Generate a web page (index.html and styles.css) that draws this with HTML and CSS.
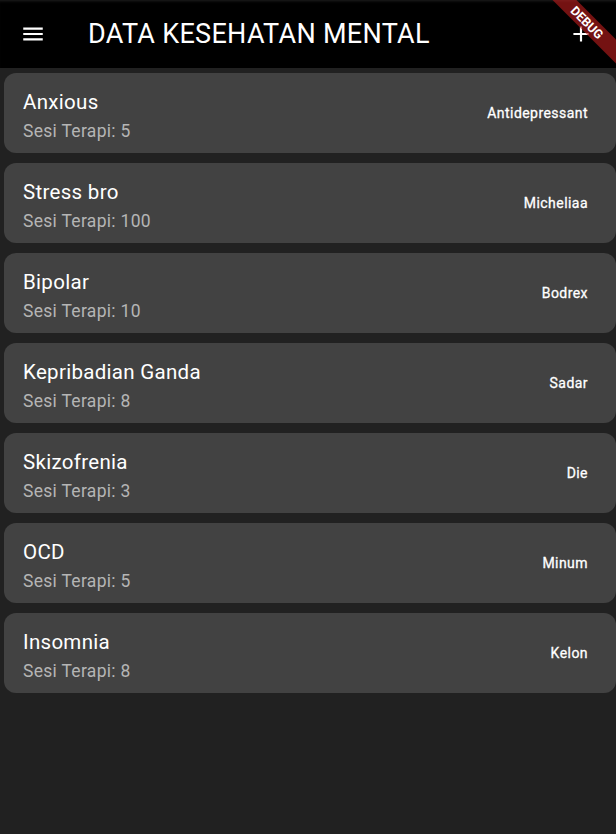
FILE: index.html
```html
<!DOCTYPE html>
<html>
<head>
<meta charset="utf-8">
<link rel="stylesheet" href="styles.css">
</head>
<body>
<header class="appbar">
  <svg class="menu" width="24" height="24" viewBox="0 0 24 24"><path d="M3 18h18v-2H3v2zm0-5h18v-2H3v2zm0-7v2h18V6H3z" fill="#fff"/></svg>
  <h1 class="title">DATA KESEHATAN MENTAL</h1>
  <svg class="add" width="24" height="24" viewBox="0 0 24 24"><path d="M19 13h-6v6h-2v-6H5v-2h6V5h2v6h6v2z" fill="#fff"/></svg>
  <div class="debug">DEBUG</div>
</header>
<main class="list">
  <div class="card"><div class="txt"><div class="name">Anxious</div><div class="sub">Sesi Terapi: 5</div></div><div class="trail">Antidepressant</div></div>
  <div class="card"><div class="txt"><div class="name">Stress bro</div><div class="sub">Sesi Terapi: 100</div></div><div class="trail">Micheliaa</div></div>
  <div class="card"><div class="txt"><div class="name">Bipolar</div><div class="sub">Sesi Terapi: 10</div></div><div class="trail">Bodrex</div></div>
  <div class="card"><div class="txt"><div class="name">Kepribadian Ganda</div><div class="sub">Sesi Terapi: 8</div></div><div class="trail">Sadar</div></div>
  <div class="card"><div class="txt"><div class="name">Skizofrenia</div><div class="sub">Sesi Terapi: 3</div></div><div class="trail">Die</div></div>
  <div class="card"><div class="txt"><div class="name">OCD</div><div class="sub">Sesi Terapi: 5</div></div><div class="trail">Minum</div></div>
  <div class="card"><div class="txt"><div class="name">Insomnia</div><div class="sub">Sesi Terapi: 8</div></div><div class="trail">Kelon</div></div>
</main>
</body>
</html>
```
FILE: styles.css
```css
html, body {
  margin: 0;
  padding: 0;
  background: #212121;
  font-family: Roboto, "Noto Sans", sans-serif;
  width: 616px;
  height: 834px;
  overflow: hidden;
}
.appbar {
  position: relative;
  height: 68px;
  background: #000;
  display: flex;
  align-items: center;
  padding: 0 0 0 20px;
  box-sizing: border-box;
  overflow: hidden;
  box-shadow: inset 0 3px 3px -2px rgba(255,255,255,0.12);
}
.menu {
  width: 26px;
  height: 26px;
}
.title {
  margin: -1px 0 0 42px;
  font-size: 27px;
  font-weight: 400;
  color: #fff;
  flex: 1;
  letter-spacing: 0.3px;
}
.add {
  width: 26px;
  height: 26px;
  margin-right: 22px;
}
.debug {
  position: absolute;
  top: 14px;
  right: -27px;
  width: 112px;
  height: 17px;
  background: rgba(183, 28, 28, 0.63);
  color: #fff;
  font-size: 12.5px;
  font-weight: 700;
  line-height: 17px;
  text-align: center;
  transform: rotate(45deg);
}
.list {
  padding: 5px 0 0 4px;
  display: flex;
  flex-direction: column;
  gap: 10px;
}
.card {
  width: 612px;
  height: 80px;
  box-sizing: border-box;
  background: #424242;
  border-radius: 12px;
  display: flex;
  align-items: center;
  padding: 0 28px 0 19px;
}
.txt {
  flex: 1;
  align-self: stretch;
  display: flex;
  flex-direction: column;
  padding-top: 15px;
}
.name {
  font-size: 20.5px;
  color: #fff;
  line-height: 28px;
  letter-spacing: 0.3px;
}
.sub {
  font-size: 17.5px;
  color: #b5b5b5;
  line-height: 24px;
  margin-top: 3px;
  letter-spacing: 0.3px;
}
.trail {
  font-size: 14px;
  font-weight: 400;
  color: #fff;
  letter-spacing: 0.45px;
  -webkit-text-stroke: 0.3px #fff;
}
```
